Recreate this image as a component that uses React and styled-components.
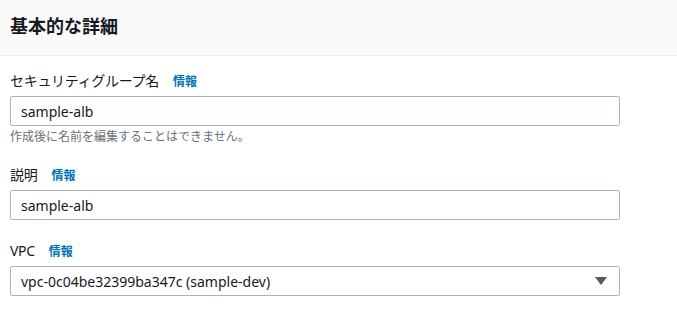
import React from 'react';
import styled, { createGlobalStyle } from 'styled-components';

const GlobalStyle = createGlobalStyle`
  html, body {
    margin: 0;
    padding: 0;
    background: #ffffff;
  }
  * { box-sizing: border-box; }
  body {
    font-family: "Noto Sans", "Noto Sans CJK JP", sans-serif;
    color: #16191f;
  }
`;

const Panel = styled.div`
  width: 677px;
  height: 311px;
  background: #ffffff;
  overflow: hidden;
`;

const Header = styled.div`
  height: 56px;
  background: #fafafa;
  border-bottom: 1px solid #eaeded;
  display: flex;
  align-items: center;
  padding: 0 10px 4px;
`;

const Title = styled.h2`
  margin: 0;
  font-size: 18px;
  font-weight: 700;
  line-height: 22px;
  color: #16191f;
`;

const Body = styled.div`
  display: flex;
  flex-direction: column;
  gap: 20px;
  padding: 14px 0 0 10px;
  width: 620px;
`;

const Field = styled.div`
  display: flex;
  flex-direction: column;
`;

const LabelRow = styled.div`
  display: flex;
  align-items: center;
  gap: 14px;
  height: 22px;
  margin-bottom: 4px;
`;

const Label = styled.label`
  font-size: 14px;
  line-height: 22px;
  letter-spacing: -0.3px;
  color: #16191f;
`;

const Info = styled.a`
  font-size: 12px;
  font-weight: 700;
  color: #0073bb;
  text-decoration: none;
`;

const Box = styled.div`
  height: 30px;
  border: 1px solid #aab7b8;
  border-radius: 2px;
  background: #ffffff;
  display: flex;
  align-items: center;
  justify-content: space-between;
  padding: 0 12px 0 10px;
  font-size: 14px;
  color: #16191f;
`;

const Hint = styled.div`
  font-size: 12px;
  line-height: 16px;
  color: #687078;
  margin-top: 3px;
  margin-bottom: -1px;
`;

const Caret = () => (
  <svg width="12" height="9" viewBox="0 0 12 9">
    <path d="M0 0 H12 L6 8 Z" fill="#545b64" />
  </svg>
);

export default function App() {
  return (
    <Panel>
      <GlobalStyle />
      <Header>
        <Title>基本的な詳細</Title>
      </Header>
      <Body>
        <Field>
          <LabelRow>
            <Label>セキュリティグループ名</Label>
            <Info>情報</Info>
          </LabelRow>
          <Box>sample-alb</Box>
          <Hint>作成後に名前を編集することはできません。</Hint>
        </Field>
        <Field>
          <LabelRow>
            <Label>説明</Label>
            <Info>情報</Info>
          </LabelRow>
          <Box>sample-alb</Box>
        </Field>
        <Field>
          <LabelRow>
            <Label>VPC</Label>
            <Info>情報</Info>
          </LabelRow>
          <Box>
            <span>vpc-0c04be32399ba347c (sample-dev)</span>
            <Caret />
          </Box>
        </Field>
      </Body>
    </Panel>
  );
}
